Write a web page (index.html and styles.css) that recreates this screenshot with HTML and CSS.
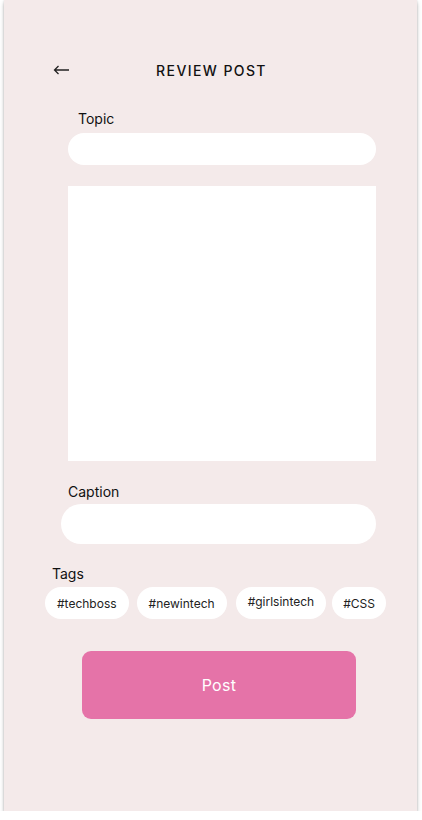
FILE: index.html
```html
<!DOCTYPE html>
<html>
<head>
<meta charset="utf-8">
<link rel="stylesheet" href="styles.css">
</head>
<body>
<div class="frame">
  <header class="header">
    <span class="back">
      <svg width="16" height="10" viewBox="0 0 16 10"><path d="M1.5 5H16M5.5 1L1.5 5L5.5 9" fill="none" stroke="#222" stroke-width="1.3"/></svg>
    </span>
    <h1 class="title">REVIEW POST</h1>
    <span></span>
  </header>
  <label class="label label-topic">Topic</label>
  <div class="input input-topic"></div>
  <div class="image"></div>
  <label class="label label-caption">Caption</label>
  <div class="input input-caption"></div>
  <label class="label label-tags">Tags</label>
  <div class="tags">
    <span class="chip">#techboss</span>
    <span class="chip">#newintech</span>
    <span class="chip chip-up">#girlsintech</span>
    <span class="chip chip-last">#CSS</span>
  </div>
  <button class="post">Post</button>
</div>
</body>
</html>
```
FILE: styles.css
```css
html, body {
  margin: 0;
  padding: 0;
  background: #ffffff;
}
body {
  font-family: Inter, "Noto Sans", sans-serif;
  color: #111;
}
.frame {
  margin-left: 4px;
  width: 413px;
  height: 811px;
  background: #f4eaea;
  box-shadow: 0 3px 4px rgba(0,0,0,0.25), 0 0 2px rgba(0,0,0,0.15);
  display: flex;
  flex-direction: column;
  align-items: flex-start;
}
.header {
  margin-top: 60px;
  width: 100%;
  box-sizing: border-box;
  padding: 0 49px;
  height: 20px;
  display: grid;
  grid-template-columns: 1fr auto 1fr;
  align-items: center;
}
.back {
  display: flex;
  align-items: center;
}
.title {
  margin: 0;
  font-size: 14px;
  font-weight: 500;
  letter-spacing: 1.4px;
  color: #111;
  padding-left: 2px;
}
.label {
  font-size: 14px;
  line-height: 17px;
  color: #111;
}
.label-topic {
  margin-top: 30px;
  margin-left: 74px;
}
.input {
  background: #fff;
}
.input-topic {
  margin-top: 6px;
  margin-left: 64px;
  width: 308px;
  height: 32px;
  border-radius: 16px;
}
.image {
  margin-top: 21px;
  margin-left: 64px;
  width: 308px;
  height: 275px;
  background: #fff;
}
.label-caption {
  margin-top: 22px;
  margin-left: 64px;
}
.input-caption {
  margin-top: 4px;
  margin-left: 57px;
  width: 315px;
  height: 40px;
  border-radius: 20px;
}
.label-tags {
  margin-top: 21px;
  margin-left: 48px;
}
.tags {
  margin-top: 5px;
  margin-left: 41px;
  display: flex;
  gap: 8px;
}
.chip {
  background: #fff;
  height: 32px;
  border-radius: 16px;
  padding: 0 12px;
  display: flex;
  align-items: center;
  font-size: 12px;
  color: #222;
  box-sizing: border-box;
}
.chip-up {
  padding-bottom: 3px;
  margin-left: 1px;
}
.chip-last {
  padding: 0 11px;
  margin-left: -2px;
}
.post {
  margin-top: 32px;
  margin-left: 78px;
  width: 274px;
  height: 68px;
  border: none;
  border-radius: 9px;
  background: #e573a8;
  color: #fff;
  font-family: Inter, "Noto Sans", sans-serif;
  font-size: 16px;
  font-weight: 400;
  letter-spacing: 0.3px;
}
```
